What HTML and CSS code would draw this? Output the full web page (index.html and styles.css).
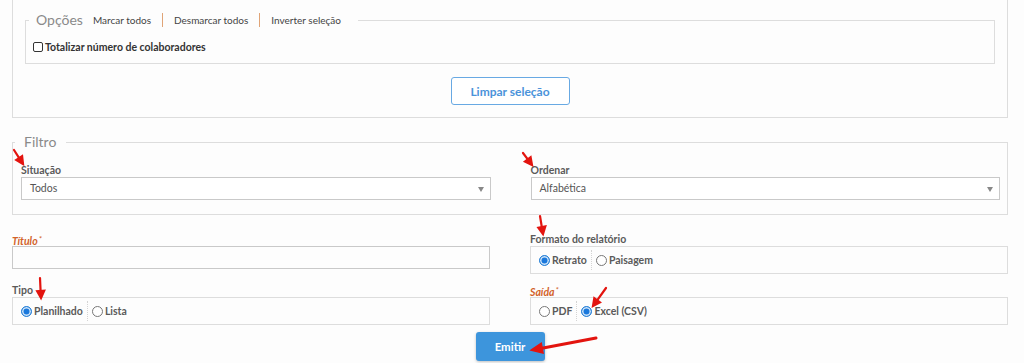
FILE: index.html
```
<html>
  <head>
    <meta charset="utf-8">
    <link rel="stylesheet" href="styles.css">
  </head>
  <body>
    <div class="page">

      <!-- Opções panel -->
      <div class="panel">
        <fieldset class="group options">
          <legend>
            Opções
            <span class="links">
              <a class="link">Marcar todos</a>
              <span class="bar"></span>
              <a class="link">Desmarcar todos</a>
              <span class="bar"></span>
              <a class="link">Inverter seleção</a>
            </span>
          </legend>
          <label class="check">
            <span class="box"></span>
            Totalizar número de colaboradores
          </label>
        </fieldset>
        <div class="panel-actions">
          <button class="btn-outline">Limpar seleção</button>
        </div>
      </div>

      <!-- Filtro -->
      <fieldset class="group filter">
        <legend>Filtro</legend>
        <div class="cols">
          <div class="field">
            <label class="lbl">Situação</label>
            <div class="select">Todos</div>
          </div>
          <div class="field">
            <label class="lbl">Ordenar</label>
            <div class="select">Alfabética</div>
          </div>
        </div>
      </fieldset>

      <div class="cols form">
        <div class="field">
          <label class="lbl required">Título<sup>*</sup></label>
          <input type="text" class="text-input">
        </div>
        <div class="field">
          <label class="lbl">Formato do relatório</label>
          <div class="radios">
            <span class="radio checked"></span><span class="opt">Retrato</span>
            <span class="sep"></span>
            <span class="radio"></span><span class="opt">Paisagem</span>
          </div>
        </div>
        <div class="field">
          <label class="lbl">Tipo</label>
          <div class="radios">
            <span class="radio checked"></span><span class="opt">Planilhado</span>
            <span class="sep"></span>
            <span class="radio"></span><span class="opt">Lista</span>
          </div>
        </div>
        <div class="field">
          <label class="lbl required">Saída<sup>*</sup></label>
          <div class="radios">
            <span class="radio"></span><span class="opt">PDF</span>
            <span class="sep"></span>
            <span class="radio checked"></span><span class="opt">Excel (CSV)</span>
          </div>
        </div>
      </div>

      <div class="submit">
        <button class="btn-primary">Emitir</button>
      </div>
    </div>

    <!-- red annotation arrows -->
    <svg class="marks" width="1024" height="363" viewBox="0 0 1024 363">
      <g stroke="#e3140f" stroke-width="2.2" stroke-linecap="round" fill="#e3140f">
        <line x1="14" y1="150" x2="19.2" y2="158.1"/>
        <polygon points="23,164 16.3,160 22.1,156.2"/>
        <line x1="523" y1="153" x2="527.8" y2="159.4"/>
        <polygon points="532,165 525,161.5 530.6,157.3"/>
        <line x1="540" y1="216" x2="541.8" y2="227"/>
        <polygon points="543,234 538.4,227.7 545.3,226.5"/>
        <line x1="40" y1="278" x2="40.6" y2="291"/>
        <polygon points="41,298 37.2,291.2 44.2,290.8"/>
        <line x1="606" y1="288" x2="597.1" y2="300.3"/>
        <polygon points="593,306 594.3,298.3 599.9,302.4"/>
        <line x1="596" y1="338" x2="541.8" y2="348.2" stroke-width="3"/>
        <polygon points="532,350 541,343.8 542.6,352.6"/>
      </g>
    </svg>
  </body>
</html>
```

FILE: styles.css
```
* {
  box-sizing: border-box;
  margin: 0;
  padding: 0;
}

body {
  background: #fdfdfd;
  font-family: 'Lato', 'Liberation Sans', sans-serif;
  color: #555;
}

.page {
  padding: 0 16px 0 12px;
}

.panel {
  margin-top: -10px;
  padding: 20px 12px 12px;
  border: 1px solid #ddd;
}

.group {
  border: 1px solid #ddd;
}

.group legend {
  height: 18px;
  line-height: 18px;
  font-size: 14px;
  color: #8a8a8a;
}

.options {
  padding: 12px 7px 10px;
}

.options legend {
  margin-left: -4px;
  padding: 0 17px 0 7px;
  display: flex;
  align-items: center;
}

.links {
  display: flex;
  align-items: center;
  margin-left: 10px;
  gap: 11px;
}

.link {
  font-size: 10px;
  color: #444;
  cursor: pointer;
}

.bar {
  width: 1px;
  height: 14px;
  background: #e0a477;
}

.check {
  display: flex;
  align-items: center;
  gap: 2px;
  height: 12px;
  font-size: 10.5px;
  font-weight: 700;
  color: #333;
}

.check .box {
  width: 10px;
  height: 10px;
  border: 1.6px solid #333;
  border-radius: 2px;
  background: #fff;
}

.panel-actions {
  display: flex;
  justify-content: center;
  margin-top: 13px;
}

.btn-outline {
  width: 119px;
  height: 28px;
  background: #fff;
  border: 1px solid #68a9e3;
  border-radius: 3px;
  color: #4a93da;
  font-family: 'Lato', sans-serif;
  font-size: 12px;
  font-weight: 700;
}

.filter {
  margin-top: 15px;
  padding: 13px 7px 14px 8px;
}

.filter legend {
  margin-left: -6px;
  padding: 0 10px 0 9px;
}

.cols {
  display: grid;
  grid-template-columns: 1fr 1fr;
  column-gap: 40px;
}

.form {
  margin-top: 18px;
  row-gap: 10px;
  align-items: start;
}

.lbl {
  display: block;
  height: 12px;
  line-height: 12px;
  margin-bottom: 1px;
  font-size: 10.5px;
  font-weight: 700;
  color: #5a5a5a;
}

.lbl.required {
  color: #d2622a;
  font-style: italic;
}

.lbl sup {
  font-size: 8px;
  font-weight: 400;
  vertical-align: 3px;
  margin-left: 1px;
}

.select {
  position: relative;
  height: 23px;
  line-height: 21px;
  padding: 0 8px;
  border: 1px solid #c9c9c9;
  background: #fff;
  font-size: 10.5px;
  color: #555;
}

.select::after {
  content: '';
  position: absolute;
  right: 6px;
  top: 9px;
  border-left: 3px solid transparent;
  border-right: 3px solid transparent;
  border-top: 5px solid #888;
}

.text-input {
  display: block;
  width: 100%;
  height: 23px;
  border: 1px solid #c9c9c9;
  background: #fdfdfd;
  outline: none;
}

.radios {
  display: flex;
  align-items: center;
  height: 28px;
  padding: 0 8px;
  border: 1px solid #ddd;
}

.radio {
  width: 11px;
  height: 11px;
  border: 1px solid #777;
  border-radius: 50%;
  background: #fff;
  margin-right: 2px;
}

.radio.checked {
  border-color: #2a83d8;
  background: #1a78dc;
  box-shadow: inset 0 0 0 1.5px #cfe4f8;
}

.opt {
  font-size: 10.5px;
  font-weight: 700;
  color: #5a5a5a;
}

.sep {
  width: 0;
  height: 20px;
  border-left: 1px dotted #d4d4d4;
  margin: 0 4px;
}

.submit {
  display: flex;
  justify-content: center;
  margin-top: 7px;
}

.btn-primary {
  width: 69px;
  height: 29px;
  border: none;
  border-radius: 3px;
  background: #3d95dc;
  color: #fff;
  font-family: 'Lato', sans-serif;
  font-size: 11.5px;
  font-weight: 700;
  box-shadow: 0 1px 3px rgba(0, 0, 0, 0.25);
}

.marks {
  position: absolute;
  left: 0;
  top: 0;
  pointer-events: none;
}
```
